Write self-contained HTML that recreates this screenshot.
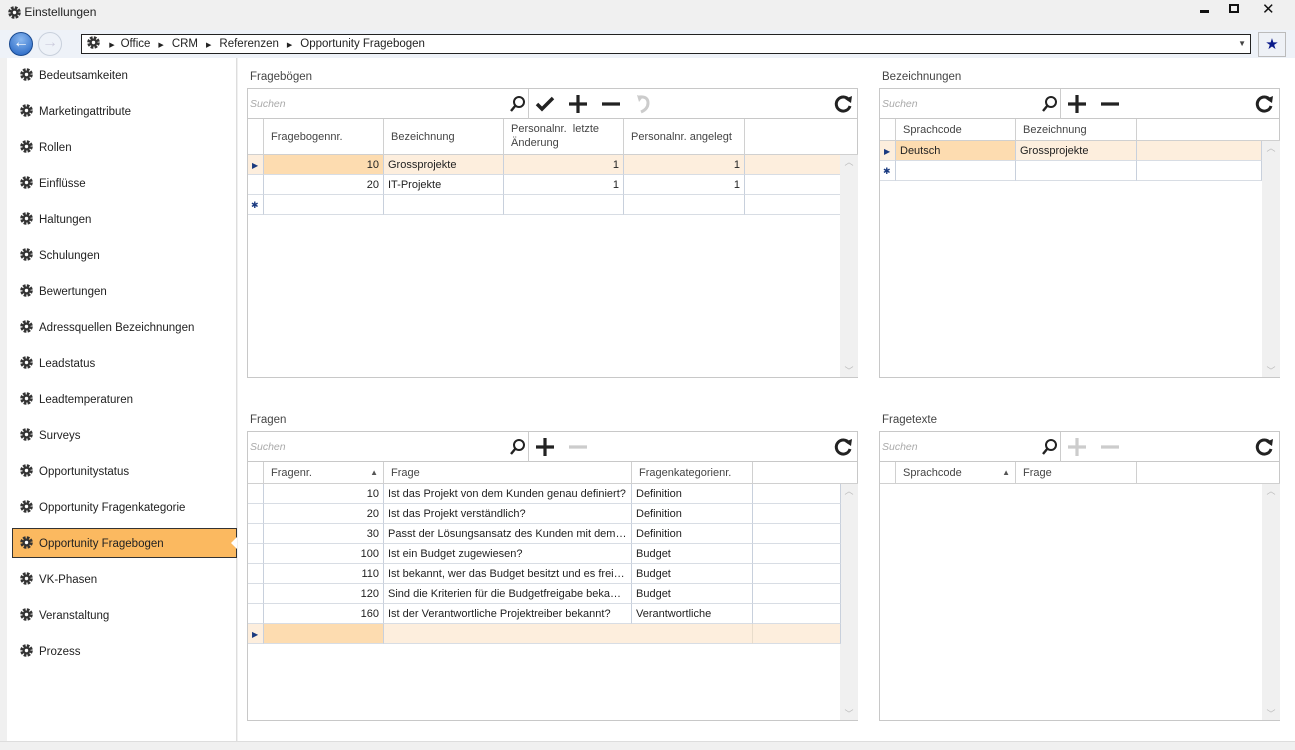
<!DOCTYPE html><html><head><meta charset="utf-8"><style>
*{box-sizing:border-box;margin:0;padding:0}
body{width:1295px;height:750px;position:relative;background:#f0f0f0;font-family:"Liberation Sans",sans-serif;font-size:11px;color:#222;overflow:hidden}
.a{position:absolute}
.g{display:inline-block;width:13px;height:13px;vertical-align:middle}
.side{left:7px;top:58px;width:230px;height:683px;background:#fff;border-right:1px solid #ddd}
.it{position:absolute;left:12px;width:225px;height:30px;line-height:32px;padding-left:8px;font-size:11.5px}
.it .g{margin-right:6px;margin-top:-2px}
.main{left:238px;top:58px;width:1057px;height:683px;background:#fff}
.box{position:absolute;border:1px solid #c8c8c8;background:#fff}
.lbl{position:absolute;color:#444;font-size:11.5px}
.tb{position:absolute;left:0;right:0;top:0;height:30px;border-bottom:1px solid #c8c8c8}
.srch{position:absolute;left:2px;top:9px;color:#aaa;font-style:italic;font-size:10.5px}
.cell{position:absolute;border-right:1px solid #c8d0dc;border-bottom:1px solid #d8dde4;height:20px;line-height:21px;padding:0 4px;white-space:nowrap;overflow:hidden;text-overflow:ellipsis}
.hd{position:absolute;border-right:1px solid #d0d0d0;border-bottom:1px solid #d0d0d0;padding:0 7px;color:#444;white-space:nowrap}
.r{text-align:right}
.sb{position:absolute;width:18px;background:#f0f0f0}
.sel{background:#fdeedd}.selk{background:#fddcb0}
</style></head><body>
<svg width="0" height="0" style="position:absolute"><defs><g id="gear"><circle cx="6.5" cy="6.5" r="4.8" fill="none" stroke="#333" stroke-width="3" stroke-dasharray="2.6 1.2"/><circle cx="6.5" cy="6.5" r="4" fill="#333"/><circle cx="6.5" cy="6.5" r="1.7" fill="#fff"/></g></defs></svg>
<!-- title -->
<div class="a" style="left:8px;top:5px;font-size:12px"><svg class="g"><use href="#gear"/></svg> Einstellungen</div>
<div class="a" style="left:1200px;top:10px;width:9px;height:3px;background:#111"></div>
<div class="a" style="left:1229px;top:4px;width:10px;height:9px;border:2px solid #111"></div>
<div class="a" style="left:1262px;top:0px;font-size:15px;color:#111">✕</div>
<!-- nav -->
<div class="a" style="left:0;top:30px;width:1295px;height:28px;background:#eef2f8"></div>
<div class="a" style="left:9px;top:32px;width:24px;height:24px;border-radius:50%;background:radial-gradient(circle at 50% 30%,#8ab8f0,#1d5fc0);border:1px solid #1a4a90;color:#fff;font-size:16px;line-height:20px;text-align:center;font-weight:bold">←</div>
<div class="a" style="left:38px;top:32px;width:24px;height:24px;border-radius:50%;background:#eef2f8;border:1px solid #c8d0dc;color:#ccd;font-size:16px;line-height:20px;text-align:center">→</div>
<div class="a" style="left:81px;top:34px;width:1170px;height:20px;border:1px solid #222;background:#fff;font-size:11.5px;line-height:18px;padding-left:5px">
<svg class="g" style="margin-top:-2px"><use href="#gear"/></svg>
<span style="font-size:7px;margin:0 6px">▶</span>Office<span style="font-size:7px;margin:0 8px">▶</span>CRM<span style="font-size:7px;margin:0 8px">▶</span>Referenzen<span style="font-size:7px;margin:0 8px">▶</span>Opportunity Fragebogen
<span style="position:absolute;right:4px;top:0;font-size:8px;color:#444">▼</span></div>
<div class="a" style="left:1258px;top:32px;width:28px;height:25px;border:1px solid #bbb;background:#eef1f6;color:#0a1a8a;text-align:center;line-height:23px;font-size:15px">★</div>
<!-- sidebar -->
<div class="a side"></div>
<div class="a" style="left:0;top:58px;width:7px;height:683px;background:#f0f0f0"></div>
<div class="a" style="left:12px;top:528px;width:225px;height:30px;background:#fbb960;border:1px solid #333"></div>
<div class="a" style="left:231px;top:537px;width:0;height:0;border-top:6px solid transparent;border-bottom:6px solid transparent;border-right:6px solid #fff"></div>
<div style="position:absolute;left:0;top:0">
<div class="it" style="top:60px"><svg class="g"><use href="#gear"/></svg>Bedeutsamkeiten</div>
<div class="it" style="top:96px"><svg class="g"><use href="#gear"/></svg>Marketingattribute</div>
<div class="it" style="top:132px"><svg class="g"><use href="#gear"/></svg>Rollen</div>
<div class="it" style="top:168px"><svg class="g"><use href="#gear"/></svg>Einflüsse</div>
<div class="it" style="top:204px"><svg class="g"><use href="#gear"/></svg>Haltungen</div>
<div class="it" style="top:240px"><svg class="g"><use href="#gear"/></svg>Schulungen</div>
<div class="it" style="top:276px"><svg class="g"><use href="#gear"/></svg>Bewertungen</div>
<div class="it" style="top:312px"><svg class="g"><use href="#gear"/></svg>Adressquellen Bezeichnungen</div>
<div class="it" style="top:348px"><svg class="g"><use href="#gear"/></svg>Leadstatus</div>
<div class="it" style="top:384px"><svg class="g"><use href="#gear"/></svg>Leadtemperaturen</div>
<div class="it" style="top:420px"><svg class="g"><use href="#gear"/></svg>Surveys</div>
<div class="it" style="top:456px"><svg class="g"><use href="#gear"/></svg>Opportunitystatus</div>
<div class="it" style="top:492px"><svg class="g"><use href="#gear"/></svg>Opportunity Fragenkategorie</div>
<div class="it" style="top:528px"><svg class="g"><use href="#gear"/></svg>Opportunity Fragebogen</div>
<div class="it" style="top:564px"><svg class="g"><use href="#gear"/></svg>VK-Phasen</div>
<div class="it" style="top:600px"><svg class="g"><use href="#gear"/></svg>Veranstaltung</div>
<div class="it" style="top:636px"><svg class="g"><use href="#gear"/></svg>Prozess</div>
</div>
<!-- main -->
<div class="a main"></div>
<div class="a" style="left:0;top:741px;width:1295px;height:9px;background:#f0f0f0;border-top:1px solid #ddd"></div>

<!-- Fragebögen -->
<div class="lbl" style="left:250px;top:71px">Fragebögen</div>
<div class="box" style="left:247px;top:88px;width:611px;height:290px">
 <div class="tb"><span class="srch">Suchen</span>
  <svg class="a" style="left:262px;top:6px" width="16" height="18"><circle cx="9" cy="7" r="5" fill="none" stroke="#222" stroke-width="2"/><line x1="5.5" y1="10.5" x2="1" y2="16" stroke="#222" stroke-width="2.4"/></svg>
  <div class="a" style="left:280px;top:0;width:1px;height:30px;background:#ccc"></div>
  <svg class="a" style="left:287px;top:6px" width="20" height="18"><path d="M2 9 L7 14 L18 3" fill="none" stroke="#222" stroke-width="3.5"/></svg>
  <svg class="a" style="left:320px;top:5px" width="20" height="20"><path d="M10 1V19M1 10H19" stroke="#222" stroke-width="3.2"/></svg>
  <svg class="a" style="left:353px;top:5px" width="20" height="20"><path d="M1 10H19" stroke="#222" stroke-width="3.2"/></svg>
  <svg class="a" style="left:388px;top:5px" width="16" height="20"><path d="M3 3 Q12 2 12 9 Q12 15 5 18" fill="none" stroke="#ccc" stroke-width="3"/><path d="M1 1 L3 8 L7 3Z" fill="#ccc"/></svg>
  <svg class="a" style="left:585px;top:5px" width="20" height="20"><path d="M16 6 A7 7 0 1 0 17 12" fill="none" stroke="#222" stroke-width="3"/><path d="M12 5 L19 2 L18 9Z" fill="#222"/></svg>
 </div>
 <div class="hd" style="left:0;top:30px;width:16px;height:36px"></div>
 <div class="hd" style="left:16px;top:30px;width:120px;height:36px;line-height:36px">Fragebogennr.</div>
 <div class="hd" style="left:136px;top:30px;width:120px;height:36px;line-height:36px">Bezeichnung</div>
 <div class="hd" style="left:256px;top:30px;width:120px;height:36px;line-height:14px;padding-top:3px">Personalnr.&nbsp; letzte<br>Änderung</div>
 <div class="hd" style="left:376px;top:30px;width:121px;height:36px;line-height:36px">Personalnr. angelegt</div>
 <div class="hd" style="left:497px;top:30px;width:113px;height:36px;border-right:0"></div>
 <div class="cell sel" style="left:0;top:66px;width:16px;color:#1a3a80;font-size:8px">▶</div>
 <div class="cell selk r" style="left:16px;top:66px;width:120px">10</div>
 <div class="cell sel" style="left:136px;top:66px;width:120px">Grossprojekte</div>
 <div class="cell sel r" style="left:256px;top:66px;width:120px">1</div>
 <div class="cell sel r" style="left:376px;top:66px;width:121px">1</div>
 <div class="cell sel" style="left:497px;top:66px;width:96px"></div>
 <div class="cell" style="left:0;top:86px;width:16px"></div>
 <div class="cell r" style="left:16px;top:86px;width:120px">20</div>
 <div class="cell" style="left:136px;top:86px;width:120px">IT-Projekte</div>
 <div class="cell r" style="left:256px;top:86px;width:120px">1</div>
 <div class="cell r" style="left:376px;top:86px;width:121px">1</div>
 <div class="cell" style="left:497px;top:86px;width:96px"></div>
 <div class="cell" style="left:0;top:106px;width:16px;color:#1a3a80;font-size:9px;padding:0 3px">✱</div>
 <div class="cell" style="left:16px;top:106px;width:120px"></div>
 <div class="cell" style="left:136px;top:106px;width:120px"></div>
 <div class="cell" style="left:256px;top:106px;width:120px"></div>
 <div class="cell" style="left:376px;top:106px;width:121px"></div>
 <div class="cell" style="left:497px;top:106px;width:96px"></div>
 <div class="sb" style="left:592px;top:66px;height:222px"><div style="color:#bbb;font-size:9px;text-align:center">︿</div><div style="color:#bbb;font-size:9px;text-align:center;position:absolute;bottom:0;width:18px">﹀</div></div>
</div>

<!-- Bezeichnungen -->
<div class="lbl" style="left:882px;top:71px">Bezeichnungen</div>
<div class="box" style="left:879px;top:88px;width:401px;height:290px">
 <div class="tb"><span class="srch">Suchen</span>
  <svg class="a" style="left:162px;top:6px" width="16" height="18"><circle cx="9" cy="7" r="5" fill="none" stroke="#222" stroke-width="2"/><line x1="5.5" y1="10.5" x2="1" y2="16" stroke="#222" stroke-width="2.4"/></svg>
  <div class="a" style="left:180px;top:0;width:1px;height:30px;background:#ccc"></div>
  <svg class="a" style="left:187px;top:5px" width="20" height="20"><path d="M10 1V19M1 10H19" stroke="#222" stroke-width="3.2"/></svg>
  <svg class="a" style="left:220px;top:5px" width="20" height="20"><path d="M1 10H19" stroke="#222" stroke-width="3.2"/></svg>
  <svg class="a" style="left:374px;top:5px" width="20" height="20"><path d="M16 6 A7 7 0 1 0 17 12" fill="none" stroke="#222" stroke-width="3"/><path d="M12 5 L19 2 L18 9Z" fill="#222"/></svg>
 </div>
 <div class="hd" style="left:0;top:30px;width:16px;height:22px"></div>
 <div class="hd" style="left:16px;top:30px;width:120px;height:22px;line-height:22px">Sprachcode</div>
 <div class="hd" style="left:136px;top:30px;width:121px;height:22px;line-height:22px">Bezeichnung</div>
 <div class="hd" style="left:257px;top:30px;width:143px;height:22px;border-right:0"></div>
 <div class="cell sel" style="left:0;top:52px;width:16px;color:#1a3a80;font-size:8px">▶</div>
 <div class="cell selk" style="left:16px;top:52px;width:120px">Deutsch</div>
 <div class="cell sel" style="left:136px;top:52px;width:121px">Grossprojekte</div>
 <div class="cell sel" style="left:257px;top:52px;width:125px"></div>
 <div class="cell" style="left:0;top:72px;width:16px;color:#1a3a80;font-size:9px;padding:0 3px">✱</div>
 <div class="cell" style="left:16px;top:72px;width:120px"></div>
 <div class="cell" style="left:136px;top:72px;width:121px"></div>
 <div class="cell" style="left:257px;top:72px;width:125px"></div>
 <div class="sb" style="left:382px;top:52px;height:236px"><div style="color:#bbb;font-size:9px;text-align:center">︿</div><div style="color:#bbb;font-size:9px;text-align:center;position:absolute;bottom:0;width:18px">﹀</div></div>
</div>

<!-- Fragen -->
<div class="lbl" style="left:250px;top:414px">Fragen</div>
<div class="box" style="left:247px;top:431px;width:611px;height:290px">
 <div class="tb"><span class="srch">Suchen</span>
  <svg class="a" style="left:262px;top:6px" width="16" height="18"><circle cx="9" cy="7" r="5" fill="none" stroke="#222" stroke-width="2"/><line x1="5.5" y1="10.5" x2="1" y2="16" stroke="#222" stroke-width="2.4"/></svg>
  <div class="a" style="left:280px;top:0;width:1px;height:30px;background:#ccc"></div>
  <svg class="a" style="left:287px;top:5px" width="20" height="20"><path d="M10 1V19M1 10H19" stroke="#222" stroke-width="3.2"/></svg>
  <svg class="a" style="left:320px;top:5px" width="20" height="20"><path d="M1 10H19" stroke="#ccc" stroke-width="3.2"/></svg>
  <svg class="a" style="left:585px;top:5px" width="20" height="20"><path d="M16 6 A7 7 0 1 0 17 12" fill="none" stroke="#222" stroke-width="3"/><path d="M12 5 L19 2 L18 9Z" fill="#222"/></svg>
 </div>
 <div class="hd" style="left:0;top:30px;width:16px;height:22px"></div>
 <div class="hd" style="left:16px;top:30px;width:120px;height:22px;line-height:22px">Fragenr.<span style="position:absolute;right:5px;font-size:8px;color:#555">▲</span></div>
 <div class="hd" style="left:136px;top:30px;width:248px;height:22px;line-height:22px">Frage</div>
 <div class="hd" style="left:384px;top:30px;width:121px;height:22px;line-height:22px">Fragenkategorienr.</div>
 <div class="hd" style="left:505px;top:30px;width:105px;height:22px;border-right:0"></div>
 <div class="sb" style="left:592px;top:52px;height:236px"><div style="color:#bbb;font-size:9px;text-align:center">︿</div><div style="color:#bbb;font-size:9px;text-align:center;position:absolute;bottom:0;width:18px">﹀</div></div>
 <div style="position:absolute;left:0;top:52px">
  <div class="cell" style="left:0;top:0;width:16px"></div><div class="cell r" style="left:16px;top:0;width:120px">10</div><div class="cell" style="left:136px;top:0;width:248px">Ist das Projekt von dem Kunden genau definiert?</div><div class="cell" style="left:384px;top:0;width:121px">Definition</div><div class="cell" style="left:505px;top:0;width:88px"></div>
  <div class="cell" style="left:0;top:20px;width:16px"></div><div class="cell r" style="left:16px;top:20px;width:120px">20</div><div class="cell" style="left:136px;top:20px;width:248px">Ist das Projekt verständlich?</div><div class="cell" style="left:384px;top:20px;width:121px">Definition</div><div class="cell" style="left:505px;top:20px;width:88px"></div>
  <div class="cell" style="left:0;top:40px;width:16px"></div><div class="cell r" style="left:16px;top:40px;width:120px">30</div><div class="cell" style="left:136px;top:40px;width:248px">Passt der Lösungsansatz des Kunden mit dem Angebot überein?</div><div class="cell" style="left:384px;top:40px;width:121px">Definition</div><div class="cell" style="left:505px;top:40px;width:88px"></div>
  <div class="cell" style="left:0;top:60px;width:16px"></div><div class="cell r" style="left:16px;top:60px;width:120px">100</div><div class="cell" style="left:136px;top:60px;width:248px">Ist ein Budget zugewiesen?</div><div class="cell" style="left:384px;top:60px;width:121px">Budget</div><div class="cell" style="left:505px;top:60px;width:88px"></div>
  <div class="cell" style="left:0;top:80px;width:16px"></div><div class="cell r" style="left:16px;top:80px;width:120px">110</div><div class="cell" style="left:136px;top:80px;width:248px">Ist bekannt, wer das Budget besitzt und es freigibt?</div><div class="cell" style="left:384px;top:80px;width:121px">Budget</div><div class="cell" style="left:505px;top:80px;width:88px"></div>
  <div class="cell" style="left:0;top:100px;width:16px"></div><div class="cell r" style="left:16px;top:100px;width:120px">120</div><div class="cell" style="left:136px;top:100px;width:248px">Sind die Kriterien für die Budgetfreigabe bekannt?</div><div class="cell" style="left:384px;top:100px;width:121px">Budget</div><div class="cell" style="left:505px;top:100px;width:88px"></div>
  <div class="cell" style="left:0;top:120px;width:16px"></div><div class="cell r" style="left:16px;top:120px;width:120px">160</div><div class="cell" style="left:136px;top:120px;width:248px">Ist der Verantwortliche Projektreiber bekannt?</div><div class="cell" style="left:384px;top:120px;width:121px">Verantwortliche</div><div class="cell" style="left:505px;top:120px;width:88px"></div>
  <div class="cell sel" style="left:0;top:140px;width:16px;color:#1a3a80;font-size:8px">▶</div><div class="cell selk" style="left:16px;top:140px;width:120px"></div><div class="cell sel" style="left:136px;top:140px;width:369px;border-right:1px solid #e8dccb"></div><div class="cell sel" style="left:505px;top:140px;width:88px"></div>
 </div>
</div>

<!-- Fragetexte -->
<div class="lbl" style="left:882px;top:414px">Fragetexte</div>
<div class="box" style="left:879px;top:431px;width:401px;height:290px">
 <div class="tb"><span class="srch">Suchen</span>
  <svg class="a" style="left:162px;top:6px" width="16" height="18"><circle cx="9" cy="7" r="5" fill="none" stroke="#222" stroke-width="2"/><line x1="5.5" y1="10.5" x2="1" y2="16" stroke="#222" stroke-width="2.4"/></svg>
  <div class="a" style="left:180px;top:0;width:1px;height:30px;background:#ccc"></div>
  <svg class="a" style="left:187px;top:5px" width="20" height="20"><path d="M10 1V19M1 10H19" stroke="#ccc" stroke-width="3.2"/></svg>
  <svg class="a" style="left:220px;top:5px" width="20" height="20"><path d="M1 10H19" stroke="#ccc" stroke-width="3.2"/></svg>
  <svg class="a" style="left:374px;top:5px" width="20" height="20"><path d="M16 6 A7 7 0 1 0 17 12" fill="none" stroke="#222" stroke-width="3"/><path d="M12 5 L19 2 L18 9Z" fill="#222"/></svg>
 </div>
 <div class="hd" style="left:0;top:30px;width:16px;height:22px"></div>
 <div class="hd" style="left:16px;top:30px;width:120px;height:22px;line-height:22px">Sprachcode<span style="position:absolute;right:5px;font-size:8px;color:#555">▲</span></div>
 <div class="hd" style="left:136px;top:30px;width:121px;height:22px;line-height:22px">Frage</div>
 <div class="hd" style="left:257px;top:30px;width:143px;height:22px;border-right:0"></div>
 <div class="sb" style="left:382px;top:52px;height:236px"><div style="color:#bbb;font-size:9px;text-align:center">︿</div><div style="color:#bbb;font-size:9px;text-align:center;position:absolute;bottom:0;width:18px">﹀</div></div>
</div>
</body></html>
